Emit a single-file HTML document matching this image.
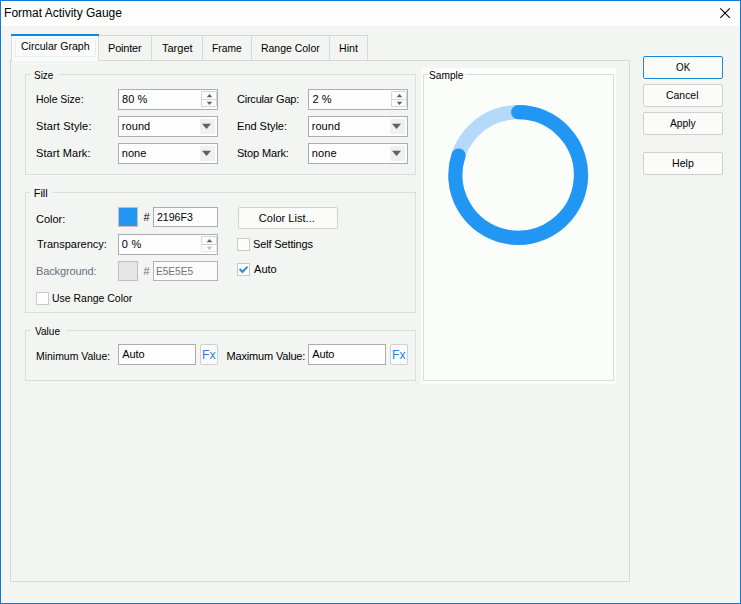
<!DOCTYPE html>
<html><head><meta charset="utf-8">
<style>
html,body{margin:0;padding:0;}
body{width:741px;height:604px;overflow:hidden;background:#F3F5F2;font-family:"Liberation Sans",sans-serif;font-size:11px;color:#000;position:relative;}
.a{position:absolute;box-sizing:border-box;}
.t{position:absolute;white-space:nowrap;line-height:14px;height:14px;}
.win{left:0;top:0;width:741px;height:604px;border:1px solid #1279D6;}
.title{left:1px;top:1px;width:739px;height:25px;background:#FDFEFD;}
.panel{left:10px;top:60px;width:620px;height:522px;border:1px solid #D9D9D9;}
.tab{top:35px;height:26px;border:1px solid #D9D9D9;border-bottom:none;background:#F3F5F2;}
.tabsel{left:11px;top:36px;width:88px;height:25px;background:#FBFCFA;border-left:1px solid #D9D9D9;border-right:1px solid #D9D9D9;}
.tabbar{left:11px;top:34px;width:88px;height:2px;background:#1586DA;}
.grp{border:1px solid #DCDCDC;}
.m{background:#F3F5F2;height:3px;}
.fld{border:1px solid #ABADB3;background:#FDFDFD;height:21px;}
.fld.dis{border-color:#B0B2B8;background:#FCFCFC;}
.btn{border:1px solid #D0D0D0;border-radius:2px;background:#FBFCFA;}
.cb{width:13px;height:13px;border:1px solid #CACACA;background:#FDFDFD;}
.sb{left:201px;width:16px;height:9px;border:1px solid #D6D6DC;background:#FDFDFD;border-radius:1px;}
.cbb{width:15px;height:15px;background:#F0F0F2;}
</style></head><body>
<div class="a win"></div>
<div class="a title"></div>
<svg class="a" style="left:715px;top:3px" width="20" height="20"><path d="M5.3 5.3 L14.8 14.8 M14.8 5.3 L5.3 14.8" stroke="#000" stroke-width="1.1" fill="none"/></svg>

<!-- tabs -->
<div class="a tab" style="left:98px;width:54px;"></div>
<div class="a tab" style="left:151px;width:52px;"></div>
<div class="a tab" style="left:202px;width:50px;"></div>
<div class="a tab" style="left:251px;width:79px;"></div>
<div class="a tab" style="left:329px;width:39px;"></div>
<div class="a panel"></div>
<div class="a tabsel"></div><div class="a tabbar"></div>
<div class="a" style="left:15px;top:38px;width:81px;height:19px;border:1px dotted #D3E3F3;"></div>

<!-- Size group -->
<div class="a grp" style="left:25px;top:74px;width:391px;height:101px;"></div>
<div class="a m" style="left:30px;top:73px;width:29px;"></div>
<div class="a fld" style="left:118px;top:89px;width:100px;"></div>
<div class="a sb" style="left:201px;top:91px;"></div><div class="a sb" style="left:201px;top:99px;height:8px;"></div>
<svg class="a" style="left:201px;top:91px" width="16" height="17"><path d="M5.7 6.3 L8.5 3 L11.3 6.3Z M5.7 10.8 L8.5 14 L11.3 10.8Z" fill="#606060"/></svg>
<div class="a fld" style="left:118px;top:116px;width:100px;"></div>
<div class="a cbb" style="left:200px;top:119px;"></div>
<svg class="a" style="left:200px;top:118px" width="16" height="17"><path d="M2 5.8 L11 5.8 L6.5 11Z" fill="#606060"/></svg>
<div class="a fld" style="left:118px;top:143px;width:100px;"></div>
<div class="a cbb" style="left:200px;top:146px;"></div>
<svg class="a" style="left:200px;top:145px" width="16" height="17"><path d="M2 5.8 L11 5.8 L6.5 11Z" fill="#606060"/></svg>

<div class="a fld" style="left:308px;top:89px;width:100px;"></div>
<div class="a sb" style="left:391px;top:91px;"></div><div class="a sb" style="left:391px;top:99px;height:8px;"></div>
<svg class="a" style="left:391px;top:91px" width="16" height="17"><path d="M5.7 6.3 L8.5 3 L11.3 6.3Z M5.7 10.8 L8.5 14 L11.3 10.8Z" fill="#606060"/></svg>
<div class="a fld" style="left:308px;top:116px;width:100px;"></div>
<div class="a cbb" style="left:390px;top:119px;"></div>
<svg class="a" style="left:390px;top:118px" width="16" height="17"><path d="M2 5.8 L11 5.8 L6.5 11Z" fill="#606060"/></svg>
<div class="a fld" style="left:308px;top:143px;width:100px;"></div>
<div class="a cbb" style="left:390px;top:146px;"></div>
<svg class="a" style="left:390px;top:145px" width="16" height="17"><path d="M2 5.8 L11 5.8 L6.5 11Z" fill="#606060"/></svg>

<!-- Fill group -->
<div class="a grp" style="left:25px;top:192px;width:391px;height:121px;"></div>
<div class="a m" style="left:30px;top:191px;width:22px;"></div>
<div class="a" style="left:118px;top:207px;width:20px;height:20px;background:#2196F3;border:1px solid #C9BDBD;"></div>
<div class="a fld" style="left:153px;top:207px;width:65px;height:20px;"></div>
<div class="a fld" style="left:118px;top:234px;width:100px;"></div>
<div class="a sb" style="left:201px;top:236px;"></div><div class="a sb" style="left:201px;top:244px;height:8px;border-color:#E9E9EC;border-top-color:#D0D0D6;"></div>
<svg class="a" style="left:201px;top:236px" width="16" height="17"><path d="M5.7 6.3 L8.5 3 L11.3 6.3Z" fill="#606060"/><path d="M5.7 10.8 L8.5 14 L11.3 10.8Z" fill="#C2C2C2"/></svg>
<div class="a" style="left:118px;top:261px;width:20px;height:20px;background:#E5E5E5;border:1px solid #C9BDBD;"></div>
<div class="a fld dis" style="left:153px;top:261px;width:65px;height:20px;"></div>
<div class="a cb" style="left:36px;top:292px;"></div>
<div class="a btn" style="left:238px;top:207px;width:100px;height:22px;"></div>
<div class="a cb" style="left:237px;top:238px;"></div>
<div class="a cb" style="left:237px;top:263px;"></div>
<svg class="a" style="left:237px;top:263px" width="13" height="13"><path d="M2.6 6 L5.5 9 L10.4 3.6" stroke="#1E8FE1" stroke-width="2" fill="none"/></svg>

<!-- Value group -->
<div class="a grp" style="left:25px;top:330px;width:391px;height:51px;"></div>
<div class="a m" style="left:30px;top:329px;width:36px;"></div>
<div class="a fld" style="left:118px;top:344px;width:78px;"></div>
<div class="a btn" style="left:200px;top:344px;width:18px;height:21px;"></div>
<div class="a fld" style="left:308px;top:344px;width:78px;"></div>
<div class="a btn" style="left:390px;top:344px;width:18px;height:21px;"></div>

<!-- Sample -->
<div class="a" style="left:421px;top:68px;width:195px;height:316px;background:#FBFDFB;"></div>
<div class="a grp" style="left:423px;top:74px;width:191px;height:307px;"></div>
<div class="a m" style="left:428px;top:73px;width:38px;background:#FBFDFB;"></div>
<svg class="a" style="left:421px;top:68px" width="195" height="316" viewBox="421 68 195 316">
<circle cx="518.2" cy="175" r="62.8" fill="none" stroke="#B5D9FB" stroke-width="14.2"/>
<path d="M518.20 112.20 A62.8 62.8 0 1 1 458.47 155.59" fill="none" stroke="#2196F3" stroke-width="14.2" stroke-linecap="round"/>
</svg>

<!-- buttons -->
<div class="a btn" style="left:643px;top:56px;width:80px;height:23px;border-color:#1A89D8;box-shadow:0 0 0 1px rgba(255,252,246,.7);"></div>
<div class="a btn" style="left:643px;top:84px;width:80px;height:23px;"></div>
<div class="a btn" style="left:643px;top:112px;width:80px;height:23px;"></div>
<div class="a btn" style="left:643px;top:152px;width:80px;height:23px;"></div>
<div class="t" style="left:4.1px;top:6.3px;font-size:12px;letter-spacing:-0.01px;">Format Activity Gauge</div>
<div class="t" style="left:21.0px;top:39.0px;font-size:11px;transform:scaleX(0.959);transform-origin:0 0;">Circular Graph</div>
<div class="t" style="left:108.0px;top:41.0px;font-size:11px;letter-spacing:-0.20px;">Pointer</div>
<div class="t" style="left:162.0px;top:41.0px;font-size:11px;letter-spacing:0.00px;">Target</div>
<div class="t" style="left:211.8px;top:41.0px;font-size:11px;transform:scaleX(0.935);transform-origin:0 0;">Frame</div>
<div class="t" style="left:260.7px;top:41.0px;font-size:11px;transform:scaleX(0.951);transform-origin:0 0;">Range Color</div>
<div class="t" style="left:339.1px;top:41.0px;font-size:11px;transform:scaleX(0.963);transform-origin:0 0;">Hint</div>
<div class="t" style="left:34.1px;top:68.0px;font-size:11px;transform:scaleX(0.905);transform-origin:0 0;">Size</div>
<div class="t" style="left:36.0px;top:92.0px;font-size:11px;transform:scaleX(0.948);transform-origin:0 0;">Hole Size:</div>
<div class="t" style="left:36.0px;top:119.0px;font-size:11px;letter-spacing:0.15px;">Start Style:</div>
<div class="t" style="left:36.0px;top:146.0px;font-size:11px;letter-spacing:0.07px;">Start Mark:</div>
<div class="t" style="left:122.0px;top:92.0px;font-size:11px;letter-spacing:0.10px;">80 %</div>
<div class="t" style="left:121.7px;top:119.0px;font-size:11px;letter-spacing:0.10px;">round</div>
<div class="t" style="left:121.7px;top:146.0px;font-size:11px;letter-spacing:0.07px;">none</div>
<div class="t" style="left:236.9px;top:92.0px;font-size:11px;letter-spacing:-0.20px;">Circular Gap:</div>
<div class="t" style="left:237.1px;top:119.0px;font-size:11px;letter-spacing:-0.03px;">End Style:</div>
<div class="t" style="left:236.9px;top:146.0px;font-size:11px;letter-spacing:-0.13px;">Stop Mark:</div>
<div class="t" style="left:312.6px;top:92.0px;font-size:11px;letter-spacing:0.00px;">2 %</div>
<div class="t" style="left:311.7px;top:119.0px;font-size:11px;letter-spacing:0.05px;">round</div>
<div class="t" style="left:311.7px;top:146.0px;font-size:11px;letter-spacing:0.13px;">none</div>
<div class="t" style="left:33.8px;top:186.0px;font-size:11px;letter-spacing:-0.07px;">Fill</div>
<div class="t" style="left:36.0px;top:212.0px;font-size:11px;letter-spacing:-0.02px;">Color:</div>
<div class="t" style="left:143.6px;top:210.0px;font-size:11px;letter-spacing:0.00px;">#</div>
<div class="t" style="left:157.1px;top:210.0px;font-size:11px;transform:scaleX(0.959);transform-origin:0 0;">2196F3</div>
<div class="t" style="left:37.0px;top:237.0px;font-size:11px;letter-spacing:0.00px;">Transparency:</div>
<div class="t" style="left:121.8px;top:237.0px;font-size:11px;letter-spacing:0.30px;">0 %</div>
<div class="t" style="left:36.0px;top:264.0px;font-size:11px;letter-spacing:-0.13px;color:#6E6F80;">Background:</div>
<div class="t" style="left:143.6px;top:264.0px;font-size:11px;letter-spacing:0.00px;color:#707074;">#</div>
<div class="t" style="left:155.7px;top:264.0px;font-size:11px;transform:scaleX(0.918);transform-origin:0 0;color:#707078;">E5E5E5</div>
<div class="t" style="left:52.1px;top:291.0px;font-size:11px;transform:scaleX(0.952);transform-origin:0 0;">Use Range Color</div>
<div class="t" style="left:258.8px;top:211.0px;font-size:11px;letter-spacing:0.03px;">Color List...</div>
<div class="t" style="left:253.1px;top:237.0px;font-size:11px;letter-spacing:-0.15px;">Self Settings</div>
<div class="t" style="left:254.1px;top:262.0px;font-size:11px;letter-spacing:0.00px;">Auto</div>
<div class="t" style="left:35.2px;top:324.0px;font-size:11px;transform:scaleX(0.915);transform-origin:0 0;">Value</div>
<div class="t" style="left:35.9px;top:349.0px;font-size:11px;transform:scaleX(0.950);transform-origin:0 0;">Minimum Value:</div>
<div class="t" style="left:122.2px;top:347.0px;font-size:11px;letter-spacing:-0.10px;">Auto</div>
<div class="t" style="left:201.9px;top:348.0px;font-size:13px;transform:scaleX(0.946);transform-origin:0 0;color:#2B7DE1;">Fx</div>
<div class="t" style="left:226.6px;top:349.0px;font-size:11px;letter-spacing:-0.18px;">Maximum Value:</div>
<div class="t" style="left:312.2px;top:347.0px;font-size:11px;letter-spacing:-0.13px;">Auto</div>
<div class="t" style="left:391.9px;top:348.0px;font-size:13px;transform:scaleX(0.938);transform-origin:0 0;color:#2B7DE1;">Fx</div>
<div class="t" style="left:428.8px;top:68.0px;font-size:11px;transform:scaleX(0.925);transform-origin:0 0;">Sample</div>
<div class="t" style="left:675.6px;top:60.0px;font-size:11px;transform:scaleX(0.894);transform-origin:0 0;">OK</div>
<div class="t" style="left:665.8px;top:88.0px;font-size:11px;transform:scaleX(0.948);transform-origin:0 0;">Cancel</div>
<div class="t" style="left:670.1px;top:116.0px;font-size:11px;transform:scaleX(0.936);transform-origin:0 0;">Apply</div>
<div class="t" style="left:671.7px;top:156.0px;font-size:11px;transform:scaleX(0.962);transform-origin:0 0;">Help</div>
</body></html>
